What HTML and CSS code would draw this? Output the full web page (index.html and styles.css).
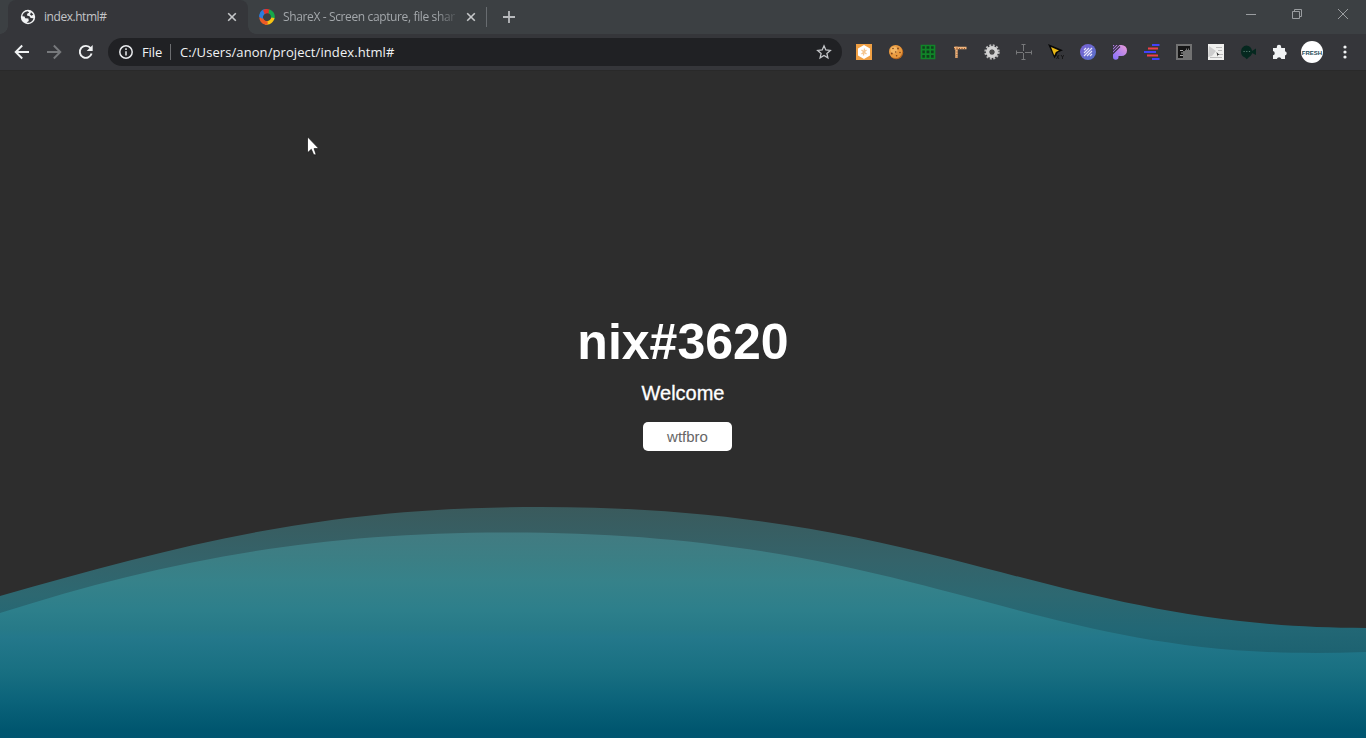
FILE: index.html
```html
<!DOCTYPE html>
<html lang="en">
<head>
<meta charset="utf-8">
<title>index.html#</title>
<link rel="stylesheet" href="styles.css">
</head>
<body>
<header class="browser">
  <div class="tabstrip">
    <div class="tab tab-active">
      <svg class="favicon" viewBox="0 0 16 16"><circle cx="8" cy="8" r="7.2" fill="#f1f3f4"/><path d="M2.300 7.200C2.600 4.300 4.800 2.300 7.800 2.200L9.200 3.600 7.200 4.800 7 6.600 9.600 7.200 10.600 9 13.500 9.200C12.800 12 10.800 13.700 8 13.800L6.600 13.400 8.800 12 8.400 9.600 5.200 9.300 4.600 7.500Z" fill="#35363a"/><path d="M11 3.300L13.300 5.500 11.600 6.800 10 5.500Z" fill="#35363a"/></svg>
      <span class="tab-title title-one">index.html#</span>
      <svg class="close" viewBox="0 0 10 10"><path d="M1.200 1.200L8.800 8.800M8.800 1.200L1.200 8.800"/></svg>
    </div>
    <div class="tab tab-idle">
      <svg class="favicon" viewBox="0 0 16 16"><path d="M7 0C3 0 0 3 .5 8L4 10.500C3.200 7 4.500 4 8.500 3.800Z" fill="#2b7de0"/><path d="M3.500 2C5.500-.3 9-.5 11 1L12 5.500C9 3.300 6 4 4.300 6.300Z" fill="#e5342b"/><path d="M10 .6C14.500 1.500 17 6 15.300 10.500L11.500 12C12.700 8.500 12.500 5.500 9.600 4.200Z" fill="#14a94b"/><path d="M15.500 9C14.500 13.500 11 16.500 6 15.500L5 11.800C8.500 12.800 11.500 11.500 12.400 8.500Z" fill="#f7c313"/><path d="M8.500 15.800C4 16 .6 13 .3 8.500L3.500 7C4 10.500 6 12.300 8.800 12.500Z" fill="#ee5a25"/><path d="M.2 8C.2 5 2 2.400 4.200 1.400L5.500 5C3.800 6.600 3.700 8.500 4.200 10Z" fill="#2b7de0"/></svg>
      <span class="tab-title title-two">ShareX - Screen capture, file shar</span>
      <svg class="close" viewBox="0 0 10 10"><path d="M1.200 1.200L8.800 8.800M8.800 1.200L1.200 8.800"/></svg>
    </div>
    <span class="tab-divider"></span>
    <svg class="plus" viewBox="0 0 12 12"><path d="M6 0V12M0 6H12"/></svg>
    <div class="window-controls">
      <svg viewBox="0 0 12 12"><path d="M1 6.500H11"/></svg>
      <svg viewBox="0 0 12 12"><path d="M1.500 3.500H8.500V10.500H1.500ZM3.500 3.500V1.500H10.500V8.500H8.500"/></svg>
      <svg viewBox="0 0 12 12"><path d="M1 1L11 11M11 1L1 11"/></svg>
    </div>
  </div>
  <div class="toolbar">
    <div class="nav">
      <svg viewBox="0 0 16 16"><path d="M15 8H2M8.200 1.500L1.700 8L8.200 14.500"/></svg>
      <svg class="disabled" viewBox="0 0 16 16"><path d="M1 8H14M7.800 1.500L14.300 8L7.800 14.500"/></svg>
      <svg viewBox="0 0 16 16"><path d="M13.600 9.500A6 6 0 1 1 12.600 4.200"/><path d="M14.700 1V7H8.700Z" fill="#f1f3f4" stroke="none"/></svg>
    </div>
    <div class="omnibox">
      <svg class="info" viewBox="0 0 14 14"><circle cx="7" cy="7" r="6.200"/><path d="M7 6.200V10.500M7 3.300V5"/></svg>
      <span class="scheme">File</span>
      <span class="omni-divider"></span>
      <span class="url">C:/Users/anon/project/index.html#</span>
      <svg class="star" viewBox="0 0 16 16"><path d="M8 1.800L9.800 6 14.300 6.400 10.900 9.400 11.900 13.900 8 11.500 4.100 13.900 5.100 9.400 1.700 6.400 6.200 6Z"/></svg>
    </div>
    <div class="extensions">
      <svg viewBox="0 0 16 16"><path d="M0 0H16V16H0Z" fill="#f0a044"/><path d="M8 1L14 4.500V11.500L8 15L2 11.500V4.500Z" fill="#fff"/><path d="M8.500 4.500L7.500 11.500M5.500 6L10.500 10M10.500 6L5.500 10" stroke="#f5c48c" stroke-width="1.300"/></svg>
      <svg viewBox="0 0 16 16"><circle cx="8.300" cy="8.300" r="6.900" fill="#b9681f"/><circle cx="7.600" cy="7.500" r="6.600" fill="#e89a40"/><circle cx="6" cy="6" r="3.500" fill="#f3b663"/><g fill="#804318"><circle cx="5" cy="4.500" r=".8"/><circle cx="10" cy="4.500" r=".9"/><circle cx="7.700" cy="8" r=".8"/><circle cx="12" cy="8.500" r=".8"/><circle cx="3.800" cy="9.500" r=".9"/><circle cx="8.600" cy="11.800" r=".8"/></g></svg>
      <svg viewBox="0 0 16 16"><path d="M1.500 1.500H14.500V14.500H1.500ZM5.700 1.500V14.500M10.200 1.500V14.500M1.500 5.700H14.500M1.500 10.200H14.500" fill="#103f1c" stroke="#118528" stroke-width="1.700"/></svg>
      <svg viewBox="0 0 16 16"><path d="M2 4H14.500M4.500 2.500V14" fill="none" stroke="#efb47c" stroke-width="2.400"/><path d="M2 4.500H14.500M5 2.500V14" fill="none" stroke="#935228" stroke-width="1" stroke-dasharray="1 1.500"/></svg>
      <svg viewBox="0 0 16 16"><circle cx="8" cy="8" r="6.500" fill="none" stroke="#b9b9b9" stroke-width="2.400" stroke-dasharray="1.900 1.500"/><circle cx="8" cy="8" r="4.300" fill="none" stroke="#d3d3d3" stroke-width="3.500"/><circle cx="8" cy="8" r="2.300" fill="#4c4c4c"/></svg>
      <svg viewBox="0 0 16 16"><path d="M7.500 1V7M7.500 9V15M1 8.500H7M9 8.500H15M5.500 .5H9.500M5.500 15.500H9.500M.5 6.500V10.500M15.500 6.500V10.500" fill="none" stroke="#77787a"/></svg>
      <svg viewBox="0 0 16 16"><path d="M0 0L15 6.300 9.800 8.600 6.500 14.500Z" fill="#080808"/><path d="M3 3L11 6.400 7.900 7.900 6.300 11.500Z" fill="#eab815"/><path d="M8.500 11L11 15M11 11L8.500 15M13 11L14.500 13L16 11M14.500 13V15" stroke="#171717" fill="none"/></svg>
      <svg viewBox="0 0 16 16"><defs><linearGradient id="orb" y2="1"><stop stop-color="#7b62d5"/><stop offset="1" stop-color="#5570c8"/></linearGradient></defs><circle cx="8" cy="8" r="8" fill="url(#orb)"/><path d="M4 6L6 4M4 9L9 4M4 12L12 4M7 12L12 7M10 12L12 10" stroke="#e6e4fa" stroke-width="1.200"/></svg>
      <svg viewBox="0 0 16 16"><defs><linearGradient id="pbrand" x1="1" x2="0" y2="1"><stop stop-color="#ec9bd6"/><stop offset="1" stop-color="#8270ff"/></linearGradient></defs><path d="M1 1H9.500A5.500 5.500 0 0 1 9.500 12H6.500V13A2.700 2.700 0 0 1 1 13Z" fill="url(#pbrand)"/><path d="M0 4.500L4 .5M0 7.500L7 .5M.5 10L8 2.500" stroke="#35303f" stroke-width="1.200"/></svg>
      <svg viewBox="0 0 16 16" fill="none" stroke-width="2"><path d="M8 1H15.500M0 8H12M8 15H15.500" stroke="#4142fa"/><path d="M4 4.500H14M3 11.500H14" stroke="#f13f48"/></svg>
      <svg viewBox="0 0 16 16"><path d="M0 0H16V16H0Z" fill="#727272"/><path d="M2 2H14V6H13V4.500H12V6H11V4.500H10V6H9V7H7V14H2Z" fill="#151515"/><path d="M4 6.500H7M5 9H7M4 11.500H7" stroke="#aaa"/></svg>
      <svg viewBox="0 0 16 16"><path d="M0 0H16V16H0Z" fill="#f0f0ee"/><path d="M1 2L8 7L4 12L0 13Z" fill="#cdcdcd"/><path d="M8 3.500H14M10 6.500H14M2 13.500H14M11 10.500H15" stroke="#bbb"/><path d="M8.500 8L11.500 11H10L9.500 12.500Z" fill="#333"/></svg>
      <svg viewBox="0 0 16 16"><path d="M6.500 1.500A6.300 6.300 0 0 1 8.800 13.300L6.800 15.200 5 13.600A6.300 6.300 0 0 1 6.500 1.500ZM12 7L16 4.500V11L12 9Z" fill="#05281f"/><path d="M3.500 7.500H4.700M6.200 7.500H7.400M8.900 7.500H10.100" stroke="#587f73"/></svg>
      <svg viewBox="0 0 16 16"><path d="M1 4H4.800V3A2.200 2.200 0 0 1 9.200 3V4H13V7.200A2.200 2.200 0 0 1 13 11.500V15H9.400A2.300 2.300 0 0 0 4.900 15H1V11.300A2.200 2.200 0 0 0 1 7Z" fill="#f1f3f4"/></svg>
    </div>
    <span class="avatar"><span>FRESH</span></span>
    <svg class="menu" viewBox="0 0 4 14" fill="#f1f3f4"><circle cx="2" cy="2" r="1.600"/><circle cx="2" cy="7" r="1.600"/><circle cx="2" cy="12" r="1.600"/></svg>
  </div>
</header>
<main class="page">
  <svg class="waves" viewBox="0 506 1366 232" preserveAspectRatio="none">
    <defs>
      <linearGradient id="back" gradientUnits="userSpaceOnUse" x1="0" y1="506" x2="0" y2="653"><stop stop-color="#3a5a5c"/><stop offset=".37" stop-color="#34636a"/><stop offset=".6" stop-color="#2d6871"/><stop offset=".84" stop-color="#226775"/><stop offset="1" stop-color="#1d6271"/></linearGradient>
      <linearGradient id="front" gradientUnits="userSpaceOnUse" x1="0" y1="532" x2="0" y2="738"><stop stop-color="#427b81"/><stop offset=".14" stop-color="#3b7f85"/><stop offset=".24" stop-color="#36828a"/><stop offset=".38" stop-color="#2d7f8b"/><stop offset=".47" stop-color="#277a88"/><stop offset=".51" stop-color="#24788b"/><stop offset=".67" stop-color="#197082"/><stop offset=".82" stop-color="#0b637a"/><stop offset=".96" stop-color="#00566f"/><stop offset="1" stop-color="#005570"/></linearGradient>
    </defs>
    <path fill="url(#back)" d="M0 596C180 545 320 507 540 507C700 507 820 526 950 559C1090 595 1200 628 1366 628V738H0Z"/>
    <path fill="url(#front)" d="M0 613C160 562 310 532.500 505 532.500C660 532.500 780 549 910 582C1050 617 1150 653 1315 653Q1340 653 1366 652V738H0Z"/>
  </svg>
  <section class="hero">
    <h1>nix#3620</h1>
    <p>Welcome</p>
    <button type="button">wtfbro</button>
  </section>
  <svg class="cursor" viewBox="0 0 12 20"><path d="M.5 .8V16.800L4.300 13.300 6.700 18.800H9.200L7.100 12.600H11.800Z" fill="#fff" stroke="#111" stroke-width=".7"/></svg>
</main>
</body>
</html>
```
FILE: styles.css
```css
* { box-sizing: border-box; }
html, body { margin: 0; height: 100%; overflow: hidden; }
body { display: flex; flex-direction: column; background: #2d2d2d; font-family: "Liberation Sans", Arial, sans-serif; }
svg { display: block; flex: none; }

.browser { height: 71px; flex: none; background: #35363a; border-bottom: 1px solid #292929; font-family: "Open Sans", "Noto Sans", sans-serif; }
.tabstrip { height: 34px; display: flex; align-items: flex-start; background: #3c4043; padding-left: 8px; }
.tab { height: 34px; width: 240px; display: flex; align-items: center; padding: 0 11px 0 12px; }
.tab-active { background: #35363a; border-radius: 8px 8px 0 0; position: relative; }
.tab-active::before, .tab-active::after { content: ""; position: absolute; bottom: 0; width: 8px; height: 8px; }
.tab-active::before { left: -8px; background: radial-gradient(circle at 0 0, transparent 7.500px, #35363a 8px); }
.tab-active::after { right: -8px; background: radial-gradient(circle at 100% 0, transparent 7.500px, #35363a 8px); }
.tab-idle { width: 238px; padding: 0 10px 0 11px; }
.favicon { width: 16px; height: 16px; margin-right: 8px; }
.tab-title { flex: 1; white-space: nowrap; font-size: 12px; line-height: 18px; color: #c3c5c8; }
.title-one { letter-spacing: -.45px; }
.title-two { color: #a3a7ab; letter-spacing: -.37px; margin-right: 6px; mask-image: linear-gradient(90deg, #000 86%, transparent); }
.close { width: 10px; height: 10px; stroke: #c6c8ca; stroke-width: 1.600; }
.tab-divider { width: 1px; height: 20px; margin-top: 7px; background: #686c70; }
.plus { width: 12px; height: 12px; margin: 11px 0 0 16px; stroke: #b8babd; stroke-width: 1.800; }
.window-controls { margin: 8px 17px 0 auto; display: flex; gap: 34px; }
.window-controls svg { width: 12px; height: 12px; fill: none; stroke: #9a9da0; }

.toolbar { height: 36px; display: flex; align-items: center; padding: 0 19px 0 14px; }
.nav { display: flex; gap: 16px; margin-right: 14px; }
.nav svg { width: 16px; height: 16px; fill: none; stroke: #f1f3f4; stroke-width: 1.900; }
.nav .disabled { stroke: #77797c; }
.omnibox { width: 734px; height: 28px; border-radius: 14px; background: #202124; color: #f1f3f4; display: flex; align-items: center; padding: 0 10px 0 11px; font-size: 13px; line-height: 18px; }
.info { width: 14px; height: 14px; fill: none; stroke: #e8eaed; stroke-width: 1.500; margin-right: 9px; }
.scheme { width: 21px; letter-spacing: -.1px; }
.omni-divider { width: 1px; height: 16px; background: #6c6d70; margin: 0 9px 0 7px; }
.url { flex: 1; letter-spacing: .08px; white-space: nowrap; }
.star { width: 16px; height: 16px; fill: none; stroke: #c4c6c9; stroke-width: 1.300; }
.extensions { display: flex; gap: 16px; margin-left: 14px; }
.extensions svg { width: 16px; height: 16px; }
.avatar { width: 22px; height: 22px; border-radius: 50%; background: #fff; margin-left: 13px; display: flex; align-items: center; justify-content: center; flex: none; }
.avatar span { font: bold 6px/8px "Liberation Sans", sans-serif; color: #234a55; padding-top: 2px; }
.menu { width: 4px; height: 14px; margin-left: 20px; }

.page { flex: 1; position: relative; background: #2d2d2d; }
.waves { position: absolute; left: 0; bottom: 0; width: 100%; height: 232px; }
.hero { position: relative; display: flex; flex-direction: column; align-items: center; padding-top: 242px; color: #fff; }
.hero h1 { margin: 0; font-size: 50px; line-height: 58px; }
.hero p { margin: 11px 0 0; font-size: 20px; line-height: 23px; -webkit-text-stroke: .3px #fff; }
.hero button { margin: 17px 0 0 9px; width: 89px; height: 29px; padding: 0; border: 0; border-radius: 5px; background: #fff; color: #666; font: 15px/29px "Liberation Sans", Arial, sans-serif; }
.cursor { position: absolute; left: 307px; top: 65px; width: 12px; height: 20px; }
```
